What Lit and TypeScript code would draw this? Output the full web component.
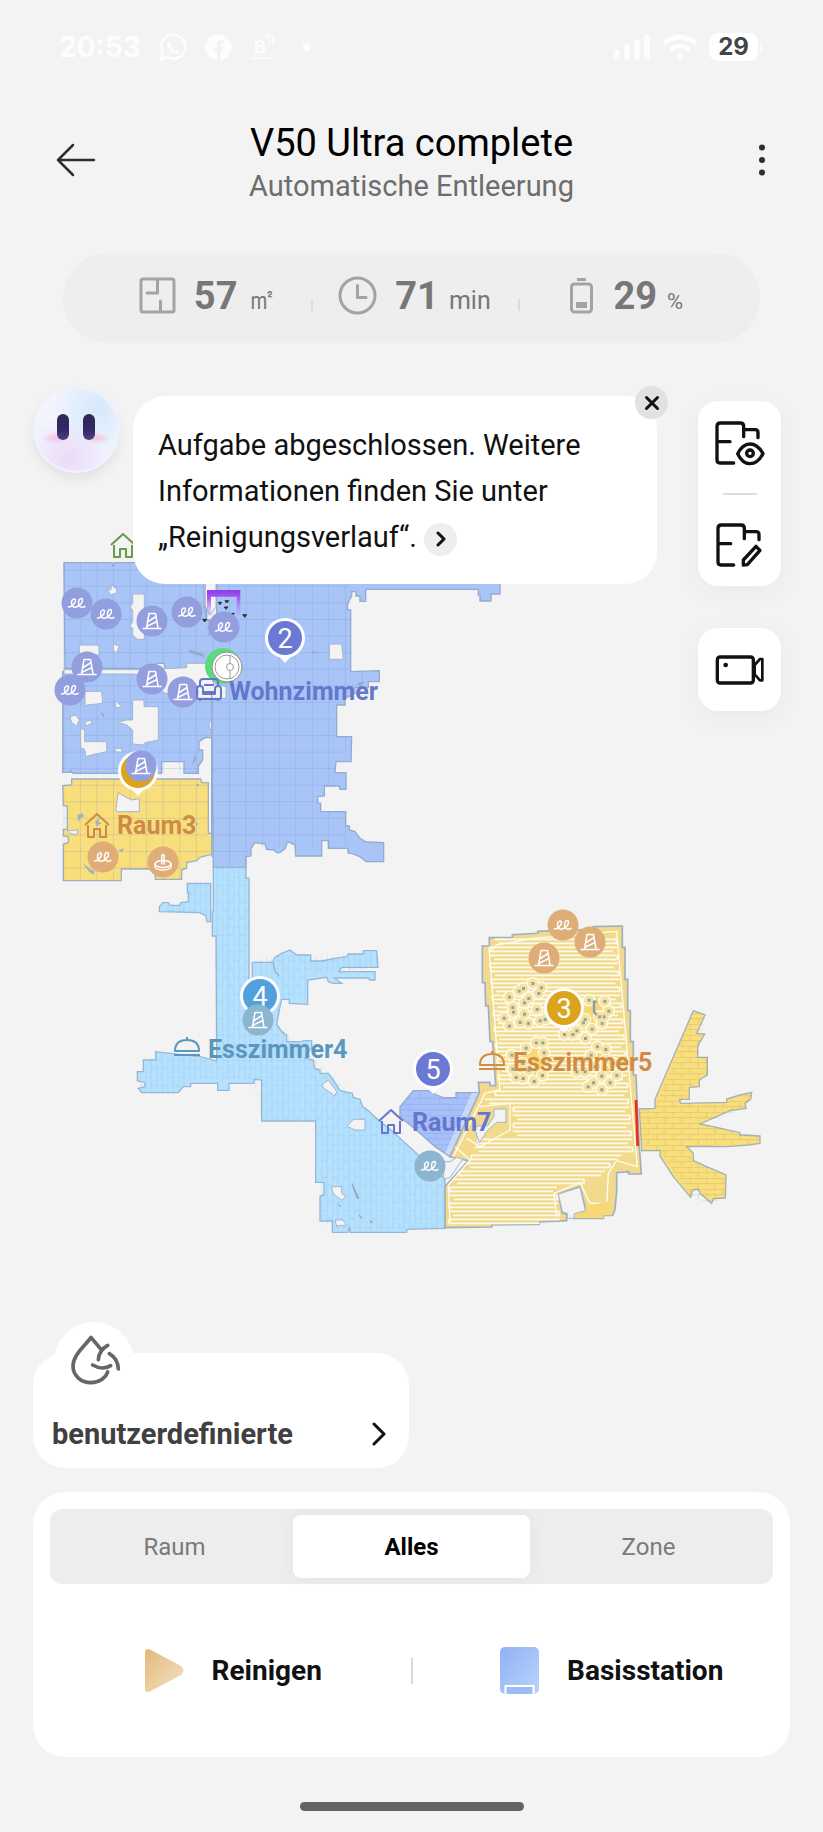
import { LitElement, html, svg, css } from "lit";
import { customElement, state } from "lit/decorators.js";
import { classMap } from "lit/directives/class-map.js";

type Hazard = "wire" | "cone" | "base";
type Tone = "indigo" | "sand" | "steel";

/* Robot map -------------------------------------------------------- */

const HAZARDS: Array<{ x: number; y: number; kind: Hazard; tone: Tone }> = [
  { x: 77, y: 603, kind: "wire", tone: "indigo" },
  { x: 106, y: 614, kind: "wire", tone: "indigo" },
  { x: 152, y: 621, kind: "cone", tone: "indigo" },
  { x: 187, y: 612, kind: "wire", tone: "indigo" },
  { x: 224, y: 627, kind: "wire", tone: "indigo" },
  { x: 87, y: 667, kind: "cone", tone: "indigo" },
  { x: 70, y: 690, kind: "wire", tone: "indigo" },
  { x: 152, y: 679, kind: "cone", tone: "indigo" },
  { x: 183, y: 692, kind: "cone", tone: "indigo" },
  { x: 141, y: 766, kind: "cone", tone: "indigo" },
  { x: 103, y: 857, kind: "wire", tone: "sand" },
  { x: 163, y: 862, kind: "base", tone: "sand" },
  { x: 258, y: 1020, kind: "cone", tone: "steel" },
  { x: 430, y: 1166, kind: "wire", tone: "steel" },
  { x: 563, y: 925, kind: "wire", tone: "sand" },
  { x: 590, y: 942, kind: "cone", tone: "sand" },
  { x: 544, y: 958, kind: "cone", tone: "sand" },
];

const LEGS: Array<[number, number]> = [
  [398, 280], [370, 295], [424, 293], [357, 303], [416, 310], [328, 321], [386, 325], [373, 338],
  [411, 358], [338, 352], [340, 366], [312, 384], [373, 372], [420, 392], [435, 388], [360, 397],
  [385, 400], [328, 408], [567, 330], [614, 334], [626, 363], [612, 380], [598, 380], [606, 400],
  [555, 388], [550, 398], [576, 417], [530, 422], [518, 433], [493, 433], [556, 445], [408, 458],
  [428, 458], [378, 474], [432, 488], [335, 495], [368, 520], [338, 537], [386, 540], [427, 556],
  [348, 562], [369, 565], [402, 574], [592, 470], [617, 478], [573, 495], [617, 510], [640, 520],
  [585, 530], [530, 545], [555, 545], [605, 558], [650, 556], [580, 578], [630, 578], [564, 590],
  [605, 599],
];

const edge = (table: Array<[number, number]>, y: number) => {
  for (let i = 1; i < table.length; i++) {
    const [y0, x0] = table[i - 1];
    const [y1, x1] = table[i];
    if (y <= y1) return Math.round(x0 + ((x1 - x0) * (y - y0)) / (y1 - y0));
  }
  return table[table.length - 1][1];
};

const LEFT: Array<[number, number]> = [
  [140, 290], [170, 268], [300, 276], [600, 298], [612, 262], [640, 250], [645, 340], [735, 340],
  [745, 235], [800, 212], [880, 150], [1000, 146],
];
const RIGHT: Array<[number, number]> = [
  [140, 648], [300, 660], [500, 678], [600, 684], [790, 700], [800, 640], [860, 606], [880, 470], [1000, 480],
];

/* Back-and-forth track the robot has driven through a room. */
const sweep = () => {
  let d = "";
  let flip = false;
  for (let y = 148; y < 990; y += 24) {
    const l = edge(LEFT, y);
    const r = edge(RIGHT, y);
    d += `M${l} ${y}H${r}`;
    d += flip ? `M${l} ${y}V${y + 12}H${r - 12}` : `M${r} ${y}V${y + 12}H${l + 12}`;
    flip = !flip;
  }
  return d;
};

const glyph = (kind: Hazard) => {
  if (kind === "wire")
    return svg`<path d="M-8.500 4C-5 4-1.500 0-1.500-2.500C-1.500-5-5.500-4.500-5.500 0C-5.500 4-2.500 5 .500 3.500C3.500 2 5.500-1 5.500-3C5.500-5.500 1.500-5 1.500 0C1.500 4 4.500 5 8 3.500"/>`;
  if (kind === "cone")
    return svg`<path d="M-9 7.500H9M-5.500 7L-3-7.500H3.500L6 7M-4.500 1L4-4.500M-5.500 5.500L5 .500"/>`;
  return svg`<path d="M-1.200 2V-7H1.200V2"/><ellipse cx="0" cy="2" rx="8" ry="3.500"/><path d="M-8 2V5C-6 9 6 9 8 5V2"/>`;
};

const pin = (x: number, y: number, label: string, color: string) => svg`
  <path class="pin-ring" d="M${x - 9} ${y + 15}L${x} ${y + 25}L${x + 9} ${y + 15}Z"/>
  <circle class="pin-ring" cx=${x} cy=${y} r="20"/>
  <circle cx=${x} cy=${y} r="17" fill=${color}/>
  <text class="pin-text" x=${x} y=${y + 10}>${label}</text>`;

const house = (x: number, y: number, color: string) => svg`
  <g class="room-icon" stroke=${color} transform="translate(${x} ${y})">
    <path d="M-12 0L0-11L12 0M-9 0V12H-3V4H3V12H9V0"/>
  </g>`;

const cloche = (x: number, y: number, color: string) => svg`
  <g class="room-icon" stroke=${color} transform="translate(${x} ${y})">
    <path d="M-13 8H13M-12 4C-12-4-7-7 0-7S12-4 12 4ZM0-7V-10"/>
  </g>`;

const floorMap = () => svg`
  <defs>
    <pattern id="tiles" width="49.700" height="49.700" patternUnits="userSpaceOnUse" x="40" y="148">
      <path d="M0 1H50M1 0V50" stroke="#5c7cb8" stroke-opacity=".34" stroke-width="2" fill="none"/>
    </pattern>
    <pattern id="planks" width="33" height="100" patternUnits="userSpaceOnUse" x="10">
      <path d="M1 0V100M17 0V100M1 12H17M1 62H17M17 36H33M17 86H33" stroke="#5c9ccc" stroke-opacity=".28" stroke-width="2" fill="none"/>
    </pattern>
    <pattern id="bricks" width="100" height="33" patternUnits="userSpaceOnUse" y="6">
      <path d="M0 1H100M0 17H100M20 1V17M70 1V17M45 17V33M95 17V33" stroke="#8a7a50" stroke-opacity=".28" stroke-width="2" fill="none"/>
    </pattern>
    <linearGradient id="dock" x1="0" y1="0" x2="0" y2="1">
      <stop offset="0" stop-color="#9038e8"/>
      <stop offset=".3" stop-color="#a45cf0"/>
      <stop offset="1" stop-color="#b58cf4" stop-opacity=".1"/>
    </linearGradient>
    <clipPath id="dining">
      <path d="M268 143H337V134L413 130V124L580 118V110L667 108V172H675V268H683V362H691V455H700V555H708L712 650L718 770L724 852H686V845L650 848V905L645 958L638 976H610V985H522V970L558 962L540 890L475 912L487 970L500 972V992L418 996V1003L275 1005V1011L135 1013V890L205 812L150 800L238 608L235 577H270V587H287L278 455H270L265 348H257L255 278H247V168H268Z"/>
    </clipPath>
  </defs>

  <g transform="translate(50 520) scale(.33333)">
    <path class="living" d="M42 128H187V136H193V128H462V258H470V300H478V345H500V190H1350V222H1323V243H1290V225H1285V208H947V244H930V228H918V215H905V228L893 250V270H902V455L988 452V485H955V503H915V520L885 535V555H860V650H905L903 725H858L855 758H888V808H870L868 798H823V828L803 830V850H812V875H887V918H898V930L915 935L930 955L948 966L1001 968V1025H948L930 1010L905 1000H895L893 985H835V962H815V1008H737L735 975L712 965L706 985L690 998H680L672 990L650 988L645 972L615 968L603 985V1008L588 1010V1042H490L485 653L465 653L447 665V690H458V720L445 738V760H402V725H335V760H70L62 752V757H38V455H265L290 462H345V445L343 430H320V445H45Z"/>
    <path class="tiles" d="M42 128H902V455L988 452L860 555V650H905L812 850V875H887V985H603L588 1042H490L485 653L447 665V760H38V128Z"/>
    <path class="void" d="M345 446L410 443V430H475L490 490L528 500V535H440L345 520L290 470L250 462H42V449H320Z"/>
    <path class="void" d="M248 222H283V358H262L248 345V325L240 318L248 305V270L240 262L248 250ZM88 375H147V405H88ZM838 372H875L880 418H838ZM172 205L182 210L185 195L200 208V220L180 224ZM190 372L208 378L200 400L190 390ZM466 190H498V260L480 285L466 258ZM248 540H282V560H325V660L285 668L280 675L248 672V630L230 615L202 607L230 600H248ZM105 514H155L158 550L105 556ZM92 625L104 630V665H170V695L135 702L108 710L104 688L92 684ZM60 590L78 585L88 600L80 618L65 608ZM195 540L215 560L198 565ZM195 685H215V697L195 695ZM105 605L125 600V610L108 618ZM478 605H485V628H478Z"/>
    <path class="wall" d="M485 520V1010M462 258L470 300"/>
    <path class="speck" d="M415 388L460 402L465 412L420 398ZM785 390L810 405L800 395L792 402ZM920 490L945 484L930 498ZM150 575L165 598L160 580ZM430 700L440 715L425 738L435 705ZM470 320L480 332L475 318Z"/>
    <path class="lounge" d="M38 797L65 795V777H452L455 788H475V940H485V1003L450 1012L440 1022L410 1028V1045L395 1050V1078H316V1047H214V1082H40V972L55 968V950L40 948V928H52V858L40 856Z"/>
    <path class="tiles" d="M65 777H475V940L485 1003L410 1028L395 1078H316V1047H214V1082H40V797Z"/>
    <path class="void" d="M205 818L225 830L245 840L268 836V875H205L197 872ZM52 932L85 930L80 945L60 940Z"/>
    <path class="rubble" d="M82 885L98 880L102 890L90 895L88 905L84 900ZM135 905L150 892L145 905L155 910L140 918ZM205 990L222 985L215 998ZM100 1030L112 1040L120 1048L134 1052L132 1064L118 1056L106 1042ZM440 790L448 795L440 800ZM436 905L446 912L438 918Z"/>
    <path d="M471 210H571V290H560V230H483V290H471Z" fill="url(#dock)"/>
    <path class="bugs" d="M505 247H515L510 254ZM525 242H536L530 249ZM523 261H534L528 268ZM545 280H553L549 286ZM578 284H590L584 292ZM458 298H470L464 306Z"/>
  </g>

  <g transform="translate(120 840) scale(.33333)">
    <path class="hall" d="M280 82H378V115H387V440H397V367H458L465 352L485 340L510 330L530 345H572V363H605L645 355L680 350L685 342H730V332H770L774 382H665L657 395H765V420H750L745 414H643L665 430H640L625 425L620 412L563 420V493L508 490V478H485L480 500L470 553L485 575L500 585V605H545L550 602H575V625L560 640L555 655L580 660L583 685L600 690V700H625L640 720L660 752L697 760L700 773L720 778L728 800L745 812L775 840L810 868L975 1018V1165L860 1168V1177H690V1160L683 1177H637V1143H600V1068L612 1065V1027H587V843H425V720L402 718V730H327V751H293V730H212V740H190L175 758H65L55 745L75 740V728L52 722V695H70V660H107V635L150 640L240 650L290 663L288 288H277V216H280Z"/>
    <path class="hall" d="M202 130H272V245H260L258 228L240 218L118 215V200L128 188H145L150 196H180L182 188L205 185V158H202Z"/>
    <path class="planks" d="M202 130H272V228L130 212V196L202 185ZM280 82H387V440H397V367L475 345H570L770 340V380L563 410V478H485L470 550L775 840L975 1018V1165L640 1170L600 1140V1027L587 843H425L402 718H212L175 758H60V695L107 640L290 663Z"/>
    <path class="void" d="M683 857L700 838H735V870H705L683 860ZM605 735L625 720L650 755L645 768L612 745ZM635 1040H665V1060L678 1070L665 1080L640 1062ZM645 1140L668 1140L680 1155L650 1158Z"/>
    <path class="speck" d="M695 1025L718 1075L712 1078L698 1045ZM715 1120L728 1135L720 1134ZM650 1092L662 1096V1102ZM750 1142H758V1148H750Z"/>
    <path class="wall" d="M460 368L465 395L478 408"/>
  </g>

  <g transform="translate(400 890) scale(.33333)">
    <path class="study" d="M0 650L40 602H85L110 615L130 623H168V608H238L150 800L135 790L105 770L60 730L0 680Z"/>
    <path class="lines" d="M20 625H225M5 643H215M0 660H208M5 677H200M20 695H192M40 712H184M60 730H175M82 747H168M100 765H160M60 602V625M120 625V643M30 643V660M90 660V677M150 643V660M130 677V695M70 695V712M120 712V730M105 730V747"/>
    <path d="M215 608H238L158 800L135 790Z" fill="#fff" opacity=".4"/>
    <path class="dining" d="M268 143H337V134L413 130V124L580 118V110L667 108V172H675V268H683V362H691V455H700V555H708L712 650L718 770L724 852H686V845L650 848V905L645 958L638 976H610V985H522V970L558 962L540 890L475 912L487 970L500 972V992L418 996V1003L275 1005V1011L135 1013V890L205 812L150 800L238 608L235 577H270V587H287L278 455H270L265 348H257L255 278H247V168H268Z"/>
    <g clip-path="url(#dining)">
      <path d=${sweep()} fill="none" stroke="#f7ebbd" stroke-width="7"/>
      <path d=${sweep()} fill="none" stroke="#fffdf4" stroke-width="3"/>
      <path class="track" d="M290 165L268 185L300 600L255 610L160 800M640 125L650 125L712 830L650 812L625 850L620 960M290 165L400 145L640 125M150 995L145 885L210 810L165 770M240 650L330 640V720L240 770L200 745M470 980L462 910L540 878L570 940H610"/>
      <path class="warm" d="M540 360L590 325L620 350L600 400L530 425ZM370 480L430 455L440 520L400 560L340 550ZM560 500L620 480L650 530L600 560ZM570 945L625 935L640 985H520V970Z"/>
      ${LEGS.map(([x, y]) => svg`<circle class="halo" cx=${x} cy=${y} r="17"/>`)}
      ${LEGS.map(([x, y]) => svg`<circle cx=${x} cy=${y} r="14" fill="#f5e3a0"/>`)}
      ${LEGS.map(([x, y]) => svg`<rect x=${x - 4} y=${y - 4} width="9" height="9" fill="#94a3a6"/>`)}
      <path class="wall-dark" d="M590 335H582V365L590 375"/>
    </g>
    <path class="void" d="M282 657H318V697H290L262 722L238 758L226 722L230 708H262L282 680Z"/>
    <path class="void" d="M132 868L128 815H150L170 802L188 808L150 862Z"/>
    <path class="void" d="M475 912L540 892L556 962L522 972V985H502V970L487 965Z"/>
    <path class="fan" d="M718 657L765 655V628L880 362L915 375L890 430L914 432L893 468V502H922V555L898 570V590L868 592V628H838L842 640L980 637V627L1020 615L1055 607L1052 628L1035 640L1038 655L990 662L900 702L950 712L1020 728V735L1080 738V760L1045 765L980 770H860L880 790V812L920 830L978 855L976 924L940 926L935 940L900 910L895 898L878 900L872 922L820 860L780 798V782H725Z"/>
    <path class="bricks" d="M718 657L765 655L880 362L915 375L893 502H922V555L868 592L842 640L980 637L1055 607L1038 655L900 702L1080 738V760L860 772L880 812L978 855L976 924L935 940L872 922L780 782H725Z"/>
    <path d="M708 630L713 768" stroke="#f02a1c" stroke-width="8"/>
  </g>

  ${house(123, 545, "#6b9a4b")}
  ${pin(285, 638, "2", "#6b79d2")}
  ${pin(138, 771, "1", "#dca31c")}
  ${pin(260, 996, "4", "#52a0dc")}
  ${pin(433, 1069, "5", "#6b79d4")}
  ${pin(564, 1008, "3", "#dca31c")}

  <circle cx="223" cy="666" r="18" fill="#5bdc7c"/>
  <circle cx="227" cy="667" r="15" fill="#fff" stroke="#8c8c8c"/>
  <g fill="none" stroke="#999"><circle cx="227" cy="667" r="12"/><circle cx="230" cy="667" r="3.500"/><path d="M230 655V663M230 671V679"/></g>

  ${HAZARDS.map(
    (h) => svg`<g class="hazard ${h.tone}" transform="translate(${h.x} ${h.y})">
      <circle r="15.500"/>${glyph(h.kind)}
    </g>`
  )}

  <g class="room-icon" stroke="#6676cc" transform="translate(209 690)">
    <path d="M-9-3V-8Q-9-11-6-11H6Q9-11 9-8V-3M-6 2V-1Q-6-4-9-4T-12-1V7Q-12 9-10 9H10Q12 9 12 7V-1Q12-4 9-4T6-1V2ZM-6 2V4H6V2M-5-5H5M-9 9V11M9 9V11"/>
  </g>
  ${house(97, 825, "#cd8b4b")}
  ${house(391, 1121, "#6676cc")}
  ${cloche(187, 1047, "#5b96bd")}
  ${cloche(492, 1061, "#d08b45")}
  <g class="room-name">
    <text x="229" y="700" fill="#6676cc">Wohnzimmer</text>
    <text x="117" y="834" fill="#cd8b4b">Raum3</text>
    <text x="208" y="1058" fill="#5b96bd">Esszimmer4</text>
    <text x="513" y="1071" fill="#d08b45">Esszimmer5</text>
    <text x="412" y="1131" fill="#6676cc">Raum7</text>
  </g>`;

@customElement("floor-map")
export class FloorMap extends LitElement {
  static styles = css`
    :host { display: block; }
    .canvas { display: block; width: 100%; height: auto; font-family: Roboto, sans-serif; }
    .living { fill: #a9c5f8; stroke: #93abcf; stroke-width: 4; }
    .lounge { fill: #f9de7c; stroke: #9fb0c0; stroke-width: 4; }
    .hall { fill: #b5e1fe; stroke: #96b8d6; stroke-width: 4; }
    .study { fill: #a6c0fa; stroke: #93abcf; stroke-width: 4; }
    .dining { fill: #f2da8c; stroke: #9fb0c0; stroke-width: 5; }
    .fan { fill: #f9de7c; stroke: #a5b2b4; stroke-width: 4; }
    .tiles { fill: url(#tiles); }
    .planks { fill: url(#planks); }
    .bricks { fill: url(#bricks); }
    .void { fill: #f3f3f3; stroke: #a3b5cf; stroke-width: 3; }
    .wall { fill: none; stroke: #93abcf; stroke-width: 4; }
    .wall-dark { fill: none; stroke: #7f9db4; stroke-width: 7; }
    .speck { fill: #95a9c4; }
    .rubble { fill: #9fb3c4; }
    .bugs { fill: #333; stroke: #333; stroke-width: 3; }
    .lines { fill: none; stroke: #6f8fd0; stroke-opacity: 0.4; stroke-width: 2; }
    .track { fill: none; stroke: #fffdf2; stroke-width: 4; }
    .warm { fill: #f6d976; }
    .halo { fill: none; stroke: #fffbea; stroke-width: 4; }
    .pin-ring { fill: #fdfdff; }
    .pin-text { fill: #fff; font-size: 27px; text-anchor: middle; }
    .hazard { fill: none; stroke: #fff; stroke-width: 1.5; stroke-linecap: round; stroke-linejoin: round; }
    .hazard circle { stroke: none; }
    .indigo circle { fill: #929edd; }
    .sand circle { fill: #dfad78; }
    .steel circle { fill: #8cb5d0; }
    .room-icon { fill: none; stroke-width: 2; stroke-linejoin: round; }
    .room-name { font-size: 25px; font-weight: 700; }
  `;

  render() {
    return html`<svg class="canvas" viewBox="0 343 823 1010" role="img" aria-label="Karte">${floorMap()}</svg>`;
  }
}

/* Screen ----------------------------------------------------------- */

@customElement("app-root")
export class AppRoot extends LitElement {
  static styles = css`
    :host {
      display: block;
      min-height: 100vh;
      background: #f3f3f3;
      color: #111;
      font-family: Roboto, sans-serif;
    }
    * { box-sizing: border-box; }
    button { border: 0; padding: 0; background: none; color: inherit; font: inherit; cursor: pointer; }
    svg { display: block; flex: none; }

    .status { display: flex; align-items: center; justify-content: space-between; height: 94px; padding: 0 61px 0 59px; color: #fdfdfd; font-family: Inter, sans-serif; }
    .status-group { display: flex; align-items: center; gap: 18px; }
    .status-end { gap: 12px; }
    .time { font-size: 28px; font-weight: 700; }
    .battery { display: flex; align-items: center; gap: 2px; }
    .charge { width: 49px; border-radius: 9px; background: #fff; color: #444; font-size: 24px; font-weight: 700; line-height: 28px; text-align: center; }
    .tip { width: 2px; height: 11px; border-radius: 1px; background: #fbfbfb; }

    .header { display: grid; grid-template-columns: 78px 1fr 78px; padding: 27px 37px 0; height: 159px; }
    .nav { display: grid; place-items: center; height: 78px; color: #2e2e2e; }
    .nav-end { width: 48px; justify-self: end; }
    .titles { text-align: center; }
    .title { margin: 0; color: #000; font-size: 38px; font-weight: 400; line-height: 44px; }
    .subtitle { margin: 0; color: #6d6d6d; font-size: 29px; line-height: 42px; }

    .stats { display: grid; grid-template-columns: repeat(3, 1fr); align-items: center; height: 90px; margin: 0 63px; padding: 0 36px 5px 42px; border-radius: 46px; background: #eee; color: #777; }
    .stat { display: flex; align-items: center; justify-content: center; gap: 18px; height: 48px; }
    .stat + .stat { background: linear-gradient(#dcdcdc, #dcdcdc) left 75% / 2px 12px no-repeat; }
    .reading { display: flex; align-items: baseline; gap: 10px; }
    .value { font-size: 38px; font-weight: 700; line-height: 48px; }
    .unit { font-size: 25px; line-height: 28px; }
    .unit-area { font-size: 30px; }
    .unit-small { font-size: 22px; }

    .stage { display: grid; }
    .stage > * { grid-area: 1 / 1; }
    .overlay { z-index: 1; display: flex; align-items: flex-start; padding: 43px 42px 0 33px; }
    .avatar { flex: none; width: 87px; height: 87px; margin-right: 13px; border-radius: 50%; border: 2px solid #f2f1fe; box-shadow: 0 6px 12px rgba(0, 0, 0, 0.07); background: radial-gradient(circle at 75% 25%, #d4e9fb 0, rgba(222, 238, 252, 0) 50%), radial-gradient(circle at 40% 85%, #ecdaf7 0, rgba(240, 228, 250, 0) 50%), #f2f4fe; }
    .bubble { position: relative; flex: 1; min-width: 0; margin: 10px 41px 0 0; padding: 26px 25px 24px; border-radius: 32px; background: #fff; }
    .message { margin: 0; font-size: 29px; line-height: 46px; }
    .more { display: inline-grid; place-items: center; width: 33px; height: 33px; border-radius: 50%; background: #eee; vertical-align: middle; }
    .close { position: absolute; top: -10px; right: -11px; display: grid; place-items: center; width: 33px; height: 33px; border-radius: 50%; background: #e1e1e1; }
    .tools { display: grid; gap: 42px; margin-top: 15px; }
    .tool-card { display: grid; width: 83px; border-radius: 20px; background: #fff; box-shadow: 0 6px 24px rgba(60, 60, 90, 0.05); }
    .tool { display: grid; place-items: center; height: 83px; }
    .rule { width: 34px; height: 2px; margin: 9px auto 8px; background: #ddd; }

    .mode { position: relative; display: flex; align-items: flex-end; justify-content: space-between; width: calc(50% - 36px); height: 115px; margin-left: 33px; padding: 0 23px 14px 19px; border-radius: 32px; background: #fff; color: #404040; font-size: 29px; font-weight: 700; line-height: 40px; }
    .mode-badge { position: absolute; top: -31px; left: 21px; width: 80px; height: 80px; padding: 11px 15px; border-radius: 50%; background: #fff; }
    .mode-go { color: #111; }

    .panel { margin: 24px 33px 0; padding: 17px 17px 0; height: 265px; border-radius: 32px; background: #fff; }
    .tabs { display: grid; grid-template-columns: repeat(3, 1fr); padding: 6px; height: 75px; border-radius: 12px; background: #ededed; }
    .tab { border-radius: 8px; color: #7a7a7a; font-size: 24px; }
    .tab.active { background: #fff; color: #000; font-weight: 700; box-shadow: 0 0 16px rgba(40, 50, 70, 0.05); }
    .actions { display: grid; grid-template-columns: 1fr 2px 1fr; align-items: center; height: 173px; }
    .action { display: flex; align-items: center; justify-content: center; gap: 28px; height: 80px; padding-left: 6px; font-size: 28px; font-weight: 700; }
    .action:last-child { padding-left: 38px; }
    .split { height: 26px; background: #d8d8d8; }
    .home { width: 224px; height: 9px; margin: 45px auto 0; border-radius: 5px; background: #636363; }
  `;

  @state() private tab = "Alles";
  @state() private open = true;

  render() {
    return html`
      <div class="status">
        <div class="status-group">
          <span class="time">20:53</span>
          <svg width="28" height="28" viewBox="0 0 28 28" fill="none" stroke="currentColor" stroke-width="2.500">
            <path d="M2 26L3.800 19.500A12 12 0 1 1 8.500 24.200Z" />
            <path d="M9 8.500Q10.500 7.500 11.500 10T11 13.500Q13 17 16 18Q17.500 15.500 18.500 16.500T20.500 18Q20 21 17 20.500Q9 18.500 8 11Q8 9.500 9 8.500Z" fill="currentColor" stroke="none" />
          </svg>
          <svg width="27" height="27" viewBox="0 0 27 27">
            <circle cx="13.500" cy="13.500" r="13" fill="currentColor" />
            <path d="M12 27V17H8.500V13H12V10Q12 6 16 6H18.500V9.500H17Q15.500 9.500 15.500 11V13H18.500L18 17H15.500V27Z" fill="#f3f3f3" />
          </svg>
          <svg width="28" height="28" viewBox="0 0 28 28" fill="none" stroke="currentColor" stroke-width="1.500">
            <text x="4" y="20" fill="currentColor" stroke="none" font-size="18" font-weight="700">B</text>
            <path d="M15 4A5 5 0 0 1 19 12M16 1A8 8 0 0 1 23 12M1 25H21" />
          </svg>
          <svg width="28" height="10" viewBox="0 0 28 10"><circle cx="11" cy="5" r="4" fill="currentColor" /></svg>
        </div>
        <div class="status-group status-end">
          <svg width="37" height="26" viewBox="0 0 37 26" stroke="currentColor" stroke-width="5.500" stroke-linecap="round"><path d="M3 18V23M13 13V23M23 8V23M33 3V23" /></svg>
          <svg width="34" height="26" viewBox="0 0 34 26" fill="none" stroke="currentColor" stroke-width="5" stroke-linecap="round"><path d="M3 8Q17-2 31 8M9 15Q17 9 25 15" /><circle cx="17" cy="22" r="3" fill="currentColor" stroke="none" /></svg>
          <div class="battery"><span class="charge">29</span><span class="tip"></span></div>
        </div>
      </div>

      <header class="header">
        <button class="nav" aria-label="Zurück">
          <svg width="40" height="34" viewBox="0 0 40 34" fill="none" stroke="currentColor" stroke-width="2.500" stroke-linecap="round" stroke-linejoin="round"><path d="M17 2L2 17L17 32M2 17H38" /></svg>
        </button>
        <div class="titles">
          <h1 class="title">V50 Ultra complete</h1>
          <p class="subtitle">Automatische Entleerung</p>
        </div>
        <button class="nav nav-end" aria-label="Mehr">
          <svg width="8" height="32" viewBox="0 0 8 32" fill="currentColor"><circle cx="4" cy="3.500" r="3" /><circle cx="4" cy="16" r="3" /><circle cx="4" cy="28.500" r="3" /></svg>
        </button>
      </header>

      <section class="stats">
        <div class="stat">
          <svg width="37" height="37" viewBox="0 0 37 37" fill="none" stroke="#a3a3a3" stroke-width="3" stroke-linecap="round" stroke-linejoin="round"><rect x="2" y="2" width="33" height="33" rx="2" /><path d="M8 16H18.500V3M21.500 34V24" /></svg>
          <div class="reading"><span class="value">57</span><span class="unit unit-area">㎡</span></div>
        </div>
        <div class="stat">
          <svg width="39" height="39" viewBox="0 0 39 39" fill="none" stroke="#a3a3a3" stroke-width="3" stroke-linecap="round"><circle cx="19.500" cy="19.500" r="17.500" /><path d="M19.500 9.500V21.500H28" /></svg>
          <div class="reading"><span class="value">71</span><span class="unit">min</span></div>
        </div>
        <div class="stat">
          <svg width="37" height="37" viewBox="0 0 37 37" fill="none" stroke="#a3a3a3" stroke-width="3"><rect x="13.500" y="7" width="20" height="28" rx="3" /><path d="M19 2.500H28" /><path d="M18 25H29V31H18Z" fill="#a3a3a3" stroke="none" /></svg>
          <div class="reading"><span class="value">29</span><span class="unit unit-small">%</span></div>
        </div>
      </section>

      <main class="stage">
        <floor-map></floor-map>
        <div class="overlay">
          <svg class="avatar" viewBox="0 0 83 83">
            <defs>
              <radialGradient id="blush"><stop offset="0" stop-color="#f4b8d8" stop-opacity=".8" /><stop offset="1" stop-color="#f4b8d8" stop-opacity="0" /></radialGradient>
              <linearGradient id="eye" x1="0" y1="0" x2="0" y2="1"><stop offset="0" stop-color="#2b2a50" /><stop offset=".6" stop-color="#32286a" /><stop offset="1" stop-color="#55407c" /></linearGradient>
            </defs>
            <ellipse cx="20" cy="50" rx="14" ry="6" fill="url(#blush)" />
            <ellipse cx="62" cy="50" rx="14" ry="6" fill="url(#blush)" />
            <rect x="22" y="26" width="12" height="26" rx="6" fill="url(#eye)" />
            <rect x="48" y="26" width="12" height="26" rx="6" fill="url(#eye)" />
          </svg>
          <div class="bubble" ?hidden=${!this.open}>
            <p class="message">
              Aufgabe abgeschlossen. Weitere Informationen finden Sie unter „Reinigungsverlauf“.
              <button class="more" aria-label="Reinigungsverlauf öffnen"><svg width="12" height="16" viewBox="0 0 12 16" fill="none" stroke="#111" stroke-width="3" stroke-linecap="round" stroke-linejoin="round"><path d="M3 2L9 8L3 14" /></svg></button>
            </p>
            <button class="close" aria-label="Schließen" @click=${() => (this.open = false)}>
              <svg width="16" height="16" viewBox="0 0 16 16" stroke="#111" stroke-width="3" stroke-linecap="round"><path d="M2.500 2.500L13.500 13.500M13.500 2.500L2.500 13.500" /></svg>
            </button>
          </div>
          <div class="tools">
            <div class="tool-card">
              <button class="tool" aria-label="Kartenansicht">
                <svg width="52" height="48" viewBox="104 80 156 144" fill="none" stroke="#111" stroke-width="10" stroke-linecap="round" stroke-linejoin="round">
                  <path d="M163 212H122Q113 212 113 203V102Q113 92 123 92H183Q193 92 193 102V133M193 112H227Q236 112 236 121V136M113 148H152" />
                  <path d="M175 184C185 164 198 155 212 155S240 164 251 184C240 205 226 214 212 214S185 205 175 184Z" /><circle cx="212" cy="183" r="10" />
                </svg>
              </button>
              <div class="rule"></div>
              <button class="tool" aria-label="Karte bearbeiten">
                <svg width="52" height="48" viewBox="104 80 156 144" fill="none" stroke="#111" stroke-width="10" stroke-linecap="round" stroke-linejoin="round">
                  <path d="M163 212H125Q116 212 116 203V102Q116 92 126 92H185Q195 92 195 102V133M195 112H230Q239 112 239 121V136M116 148H154" />
                  <path d="M192 212V197L230 156L242 168L204 211Z" />
                </svg>
              </button>
            </div>
            <div class="tool-card">
              <button class="tool" aria-label="Kamera">
                <svg width="50" height="30" viewBox="105 792 150 90" fill="none" stroke="#111" stroke-width="10" stroke-linejoin="round">
                  <rect x="112" y="798" width="108" height="78" rx="8" /><circle cx="137" cy="822" r="7" fill="#111" stroke="none" /><path d="M224 822L240 804H247V868H240L224 850Z" stroke-width="8" />
                </svg>
              </button>
            </div>
          </div>
        </div>
      </main>

      <button class="mode">
        <span class="mode-badge">
          <svg width="54" height="54" viewBox="115 73 162 162" fill="none" stroke="#666" stroke-width="11" stroke-linecap="round" stroke-linejoin="round">
            <path d="M211 122L181 86C160 115 127 140 127 172C127 200 150 222 181 222C206 222 225 208 231 190M231 110C213 120 204 135 203 153M186 169C205 180 225 180 240 171M236 135C253 145 262 160 263 181" />
          </svg>
        </span>
        <span>benutzerdefinierte</span>
        <svg class="mode-go" width="14" height="40" viewBox="0 0 14 26" fill="none" stroke="currentColor" stroke-width="3" stroke-linecap="round" stroke-linejoin="round"><path d="M2 3L12 13L2 23" /></svg>
      </button>

      <section class="panel">
        <div class="tabs" role="tablist">
          ${["Raum", "Alles", "Zone"].map(
            (name) => html`<button
              role="tab"
              aria-selected=${this.tab === name}
              class=${classMap({ tab: true, active: this.tab === name })}
              @click=${() => (this.tab = name)}
            >${name}</button>`
          )}
        </div>
        <div class="actions">
          <button class="action">
            <svg width="39" height="45" viewBox="0 0 39 45"><defs><linearGradient id="go" x1="0" y1="0" x2="1" y2="1"><stop offset="0" stop-color="#e2ba78" /><stop offset="1" stop-color="#f2e2c6" /></linearGradient></defs><path d="M0 5Q0-1 6 2L36 18Q41 22 36 27L6 43Q0 46 0 40Z" fill="url(#go)" /></svg>
            Reinigen
          </button>
          <span class="split"></span>
          <button class="action">
            <svg width="39" height="47" viewBox="0 0 39 47"><defs><linearGradient id="base" x1="0" y1="0" x2="1" y2="1"><stop offset="0" stop-color="#8fb2f4" /><stop offset="1" stop-color="#bcd3fb" /></linearGradient></defs><rect width="39" height="47" rx="5" fill="url(#base)" /><path d="M5.500 47V39H33.500V47" fill="#9dbcf6" stroke="#fff" stroke-width="2" /></svg>
            Basisstation
          </button>
        </div>
      </section>
      <div class="home"></div>
    `;
  }
}
